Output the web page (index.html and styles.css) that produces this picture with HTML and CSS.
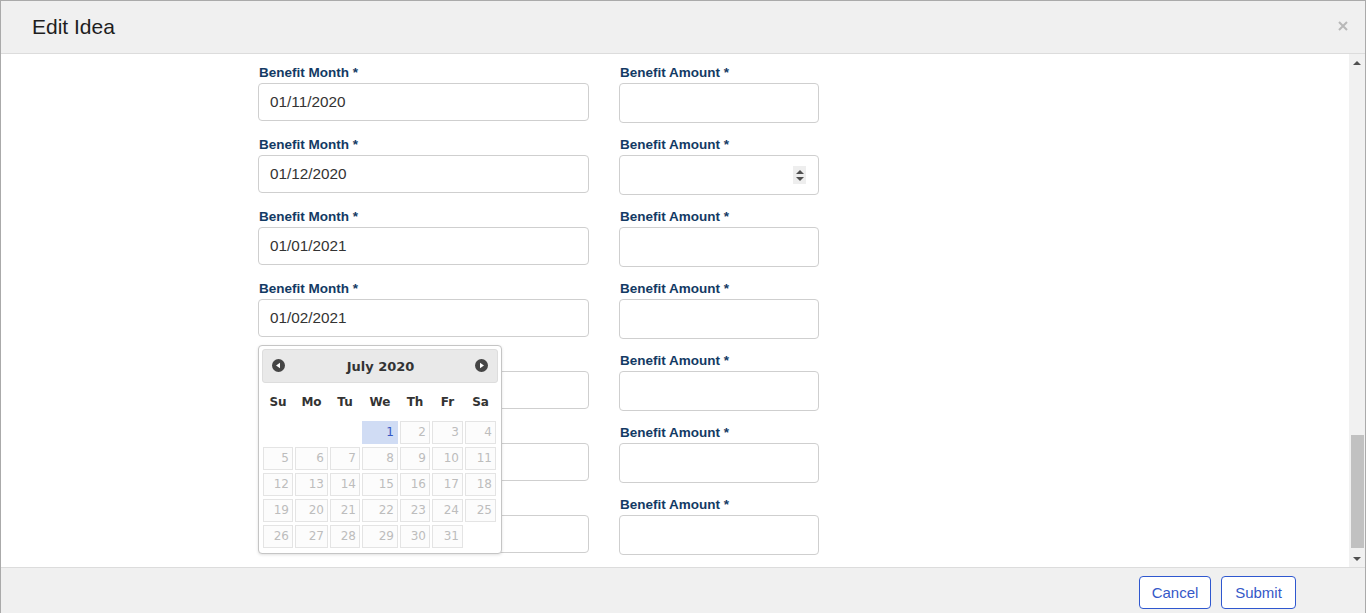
FILE: index.html
```html
<!DOCTYPE html>
<html>
<head>
<meta charset="utf-8">
<title>Edit Idea</title>
<link rel="stylesheet" href="styles.css">
</head>
<body>
<div class="modal">
  <div class="modal-header">
    <h1 class="modal-title">Edit Idea</h1>
    <span class="close" aria-label="Close">
      <svg width="10" height="10" viewBox="0 0 10 10"><path d="M1 1L9 9M9 1L1 9" stroke="#b8b8b8" stroke-width="2" fill="none"/></svg>
    </span>
  </div>
  <div class="modal-body">
    <div class="body-scroll">
      <div class="form">
        <div class="field"><label class="label">Benefit Month *</label><div class="input date">01/11/2020</div></div>
        <div class="field"><label class="label">Benefit Amount *</label><div class="input amount"></div></div>

        <div class="field"><label class="label">Benefit Month *</label><div class="input date">01/12/2020</div></div>
        <div class="field"><label class="label">Benefit Amount *</label><div class="input amount with-spin"><span class="spinner"><span class="tri-up"></span><span class="tri-down"></span></span></div></div>

        <div class="field"><label class="label">Benefit Month *</label><div class="input date">01/01/2021</div></div>
        <div class="field"><label class="label">Benefit Amount *</label><div class="input amount"></div></div>

        <div class="field"><label class="label">Benefit Month *</label><div class="input date">01/02/2021</div></div>
        <div class="field"><label class="label">Benefit Amount *</label><div class="input amount"></div></div>

        <div class="field"><label class="label covered">Benefit Month *</label><div class="input date"></div></div>
        <div class="field"><label class="label">Benefit Amount *</label><div class="input amount"></div></div>

        <div class="field"><label class="label covered">Benefit Month *</label><div class="input date"></div></div>
        <div class="field"><label class="label">Benefit Amount *</label><div class="input amount"></div></div>

        <div class="field"><label class="label covered">Benefit Month *</label><div class="input date"></div></div>
        <div class="field"><label class="label">Benefit Amount *</label><div class="input amount"></div></div>

        <div class="datepicker">
          <div class="dp-header">
            <span class="dp-nav"><svg width="13" height="13" viewBox="0 0 13 13"><circle cx="6.5" cy="6.5" r="6.5" fill="#454545"/><path d="M4 6.5L8 3.8V9.2Z" fill="#fff"/></svg></span>
            <span class="dp-title">July 2020</span>
            <span class="dp-nav"><svg width="13" height="13" viewBox="0 0 13 13"><circle cx="6.5" cy="6.5" r="6.5" fill="#454545"/><path d="M9 6.5L5 3.8V9.2Z" fill="#fff"/></svg></span>
          </div>
          <div class="dp-grid">
            <span class="dow">Su</span><span class="dow">Mo</span><span class="dow">Tu</span><span class="dow">We</span><span class="dow">Th</span><span class="dow">Fr</span><span class="dow">Sa</span>
            <span class="blank"></span><span class="blank"></span><span class="blank"></span><span class="day active">1</span><span class="day">2</span><span class="day">3</span><span class="day">4</span>
            <span class="day">5</span><span class="day">6</span><span class="day">7</span><span class="day">8</span><span class="day">9</span><span class="day">10</span><span class="day">11</span>
            <span class="day">12</span><span class="day">13</span><span class="day">14</span><span class="day">15</span><span class="day">16</span><span class="day">17</span><span class="day">18</span>
            <span class="day">19</span><span class="day">20</span><span class="day">21</span><span class="day">22</span><span class="day">23</span><span class="day">24</span><span class="day">25</span>
            <span class="day">26</span><span class="day">27</span><span class="day">28</span><span class="day">29</span><span class="day">30</span><span class="day">31</span><span class="blank"></span>
          </div>
        </div>
      </div>
    </div>
    <div class="scrollbar">
      <div class="sb-btn"><span class="sb-up"></span></div>
      <div class="sb-track"><div class="sb-thumb"></div></div>
      <div class="sb-btn"><span class="sb-down"></span></div>
    </div>
  </div>
  <div class="modal-footer">
    <button class="btn">Cancel</button>
    <button class="btn btn-submit">Submit</button>
  </div>
</div>
</body>
</html>
```

FILE: styles.css
```css
* { box-sizing: border-box; }
html, body { margin: 0; padding: 0; }
body {
  width: 1366px;
  height: 613px;
  overflow: hidden;
  background: #fff;
  font-family: "Liberation Sans", Arial, sans-serif;
  color: #333;
}
.modal {
  height: 613px;
  border: 1px solid #aaa;
  border-bottom: none;
  display: flex;
  flex-direction: column;
  background: #fff;
}
.modal-header {
  height: 53px;
  flex: none;
  background: #f0f0f0;
  border-bottom: 1px solid #dcdcdc;
  display: flex;
  align-items: center;
  justify-content: space-between;
  padding: 0 17px 0 31px;
}
.modal-title {
  margin: 0;
  font-size: 21px;
  font-weight: normal;
  color: #1e1e1e;
  line-height: 24px;
  padding-bottom: 1px;
}
.close {
  display: flex;
  width: 10px;
  height: 10px;
  margin-bottom: 2px;
}
.modal-body {
  height: 513px;
  flex: none;
  display: flex;
}
.body-scroll {
  flex: 1;
  overflow: hidden;
  padding-top: 10px;
  padding-left: 257px;
}
.form {
  position: relative;
  display: grid;
  grid-template-columns: 331px 200px;
  column-gap: 30px;
  row-gap: 13px;
  width: max-content;
  align-items: start;
}
.field {
  display: flex;
  flex-direction: column;
}
.label {
  font-size: 13.5px;
  font-weight: bold;
  line-height: 16px;
  color: #133a64;
  margin-top: 1px;
  margin-bottom: 2px;
  padding-left: 1px;
}
.input {
  border: 1px solid #cfcfcf;
  border-radius: 4px;
  background: #fff;
  font-size: 15.3px;
  color: #333;
  padding: 0 11px 1px;
  display: flex;
  align-items: center;
}
.input.date { height: 38px; }
.input.amount { height: 40px; }
.input.with-spin { justify-content: flex-end; padding: 0 12px 0 11px; }
.spinner {
  width: 13px;
  height: 18px;
  background: #eeeeee;
  display: flex;
  flex-direction: column;
  align-items: center;
  justify-content: center;
  gap: 3px;
}
.tri-up {
  width: 0; height: 0;
  border-left: 4px solid transparent;
  border-right: 4px solid transparent;
  border-bottom: 4px solid #505050;
}
.tri-down {
  width: 0; height: 0;
  border-left: 4px solid transparent;
  border-right: 4px solid transparent;
  border-top: 4px solid #505050;
}

/* datepicker */
.datepicker {
  position: absolute;
  left: 0;
  top: 281px;
  width: 244px;
  height: 209px;
  background: #fff;
  border: 1px solid #c5c5c5;
  border-radius: 4px;
  padding: 3px;
  box-shadow: 0 1px 3px rgba(0,0,0,0.12);
  font-family: "DejaVu Sans", Verdana, sans-serif;
}
.dp-header {
  height: 34px;
  background: #e9e9e9;
  border: 1px solid #dddddd;
  border-radius: 3px;
  display: flex;
  align-items: center;
  justify-content: space-between;
  padding: 0 9px;
}
.dp-nav { display: flex; width: 13px; height: 13px; margin-top: -1px; }
.dp-title {
  font-size: 13px;
  font-weight: bold;
  color: #333;
  margin-left: 1px;
}
.dp-grid {
  display: grid;
  grid-template-columns: 30px 33px 30px 36px 30px 31px 31px;
  grid-template-rows: 35px repeat(5, 23px);
  column-gap: 2px;
  row-gap: 3px;
  margin-left: 1px;
}
.dow {
  font-size: 12px;
  font-weight: bold;
  color: #333;
  text-align: center;
  align-self: center;
  margin-top: 1px;
  margin-bottom: -1px;
}
.day {
  border: 1px solid #e4e4e4;
  background: #fcfcfc;
  color: #bdbdbd;
  font-size: 12px;
  line-height: 21px;
  text-align: right;
  padding-right: 3px;
}
.day.active {
  background: #d0dcf4;
  border-color: #d0dcf4;
  color: #3457c4;
}

/* scrollbar */
.scrollbar {
  width: 16px;
  flex: none;
  background: #f1f1f1;
  display: flex;
  flex-direction: column;
}
.sb-btn {
  height: 17px;
  display: flex;
  align-items: center;
  justify-content: center;
}
.sb-up {
  width: 0; height: 0;
  border-left: 4px solid transparent;
  border-right: 4px solid transparent;
  border-bottom: 4px solid #505050;
}
.sb-down {
  width: 0; height: 0;
  border-left: 4px solid transparent;
  border-right: 4px solid transparent;
  border-top: 4px solid #505050;
}
.sb-track { flex: 1; padding: 0 1px 0 2px; }
.sb-thumb {
  margin-top: 364px;
  height: 113px;
  background: #c1c1c1;
}

/* footer */
.modal-footer {
  flex: 1;
  background: #f0f0f0;
  border-top: 1px solid #dcdcdc;
  display: flex;
  justify-content: flex-end;
  align-items: flex-start;
  gap: 10px;
  padding: 8px 69px 0 0;
}
.btn {
  height: 33px;
  width: 72px;
  padding: 0;
  background: #fff;
  border: 1px solid #2f57cf;
  border-radius: 4px;
  color: #3558c8;
  font-family: "Liberation Sans", Arial, sans-serif;
  font-size: 15px;
  cursor: pointer;
}
.btn-submit { width: 75px; }
```
